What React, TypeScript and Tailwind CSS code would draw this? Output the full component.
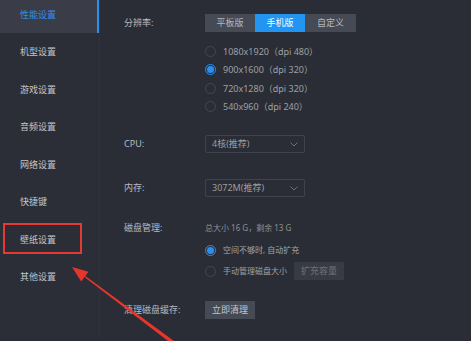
import React from "react";

const font = { fontFamily: "'Noto Sans', 'Noto Sans CJK SC', sans-serif" };

const navItems = ["性能设置", "机型设置", "游戏设置", "音频设置", "网络设置", "快捷键", "壁纸设置", "其他设置"];

function Radio({ checked }: { checked?: boolean }) {
  return checked ? (
    <span className="w-[11px] h-[11px] rounded-full border border-[#2b8ff0] flex items-center justify-center shrink-0">
      <span className="w-[7px] h-[7px] rounded-full bg-[#2b8ff0]" />
    </span>
  ) : (
    <span className="w-[11px] h-[11px] rounded-full border border-[#454851] shrink-0" />
  );
}

function Select({ value }: { value: string }) {
  return (
    <div className="w-[100px] h-[18px] border border-[#3f434c] rounded-[2px] flex items-center justify-between pl-[6px] pr-[6px] text-[9px] text-[#9a9ca2]">
      <span>{value}</span>
      <svg width="8" height="5" viewBox="0 0 8 5" fill="none">
        <path d="M0.5 0.5 L4 4 L7.5 0.5" stroke="#6d7078" strokeWidth="1" />
      </svg>
    </div>
  );
}

export default function App() {
  return (
    <div className="relative w-[471px] h-[341px] overflow-hidden bg-[#2a2d35] flex" style={font}>
      <div className="w-[100px] h-full bg-[#2b2e36] border-r border-[#30333b] shrink-0 flex flex-col mt-[-4.5px]">
        {navItems.map((n, i) => (
          <div
            key={n}
            className={
              "h-[37.5px] shrink-0 flex items-center pl-[20px] text-[9px] " +
              (i === 0
                ? "bg-[#3a3d47] text-[#2e8ff0] border-r-2 border-[#2b8ff0]"
                : "text-[#c3c5ca]")
            }
          >
            {n}
          </div>
        ))}
      </div>

      <div className="flex-1 flex flex-col pl-[24px] pt-[14px] text-[9px]">
        <div className="flex items-center h-[18px]">
          <span className="w-[81px] text-[#b9bbc0]">分辨率:</span>
          <div className="flex h-[18px] text-[9px]">
            <span className="w-[50px] flex items-center justify-center bg-[#464a55] text-[#b5b7bc]">平板版</span>
            <span className="w-[50px] flex items-center justify-center bg-[#2294f1] text-white">手机版</span>
            <span className="w-[51px] flex items-center justify-center bg-[#464a55] text-[#b5b7bc]">自定义</span>
          </div>
        </div>

        <div className="flex flex-col mt-[10px] pl-[81px]">
          {[
            ["1080x1920（dpi 480）", false],
            ["900x1600（dpi 320）", true],
            ["720x1280（dpi 320）", false],
            ["540x960（dpi 240）", false],
          ].map(([t, c]) => (
            <div key={t as string} className="h-[18.5px] flex items-center gap-[7px] text-[#9ea0a6]">
              <Radio checked={c as boolean} />
              <span>{t as string}</span>
            </div>
          ))}
        </div>

        <div className="flex items-center mt-[19px] h-[18px]">
          <span className="w-[81px] text-[#b9bbc0]">CPU:</span>
          <Select value="4核(推荐)" />
        </div>

        <div className="flex items-center mt-[26px] h-[18px]">
          <span className="w-[81px] text-[#b9bbc0]">内存:</span>
          <Select value="3072M(推荐)" />
        </div>

        <div className="flex items-center mt-[22px] h-[18px]">
          <span className="w-[81px] text-[#b9bbc0]">磁盘管理:</span>
          <span className="text-[8px] text-[#8e9096]">总大小 16 G，剩余 13 G</span>
        </div>

        <div className="flex items-center mt-[4px] h-[18px] pl-[81px] gap-[7px] text-[8px] text-[#a4a6ab]">
          <Radio checked />
          <span>空间不够时, 自动扩充</span>
        </div>

        <div className="flex items-center mt-[3px] h-[18px] pl-[81px] gap-[7px] text-[8px] text-[#9ea0a6]">
          <Radio />
          <span>手动管理磁盘大小</span>
          <span className="w-[50px] h-[18px] flex items-center justify-center bg-[#383b44] text-[9px] text-[#6e7178]">扩充容量</span>
        </div>

        <div className="flex items-center mt-[21px] h-[18px]">
          <span className="w-[81px] text-[#b9bbc0]">清理磁盘缓存:</span>
          <span className="w-[50px] h-[18px] flex items-center justify-center bg-[#464a55] text-[#c3c5ca]">立即清理</span>
        </div>
      </div>

      <div className="absolute left-[3px] top-[223px] w-[79px] h-[31px] border-2 border-solid border-[#e53a33]" />

      <svg className="absolute left-0 top-0" width="471" height="341" viewBox="0 0 471 341">
        <polygon points="72,267 81.2,281.4 88.4,271.8" fill="#e8352c" />
        <polygon points="83.3,274.6 86.3,278.6 172,344 174,341" fill="#e8352c" />
      </svg>
    </div>
  );
}
